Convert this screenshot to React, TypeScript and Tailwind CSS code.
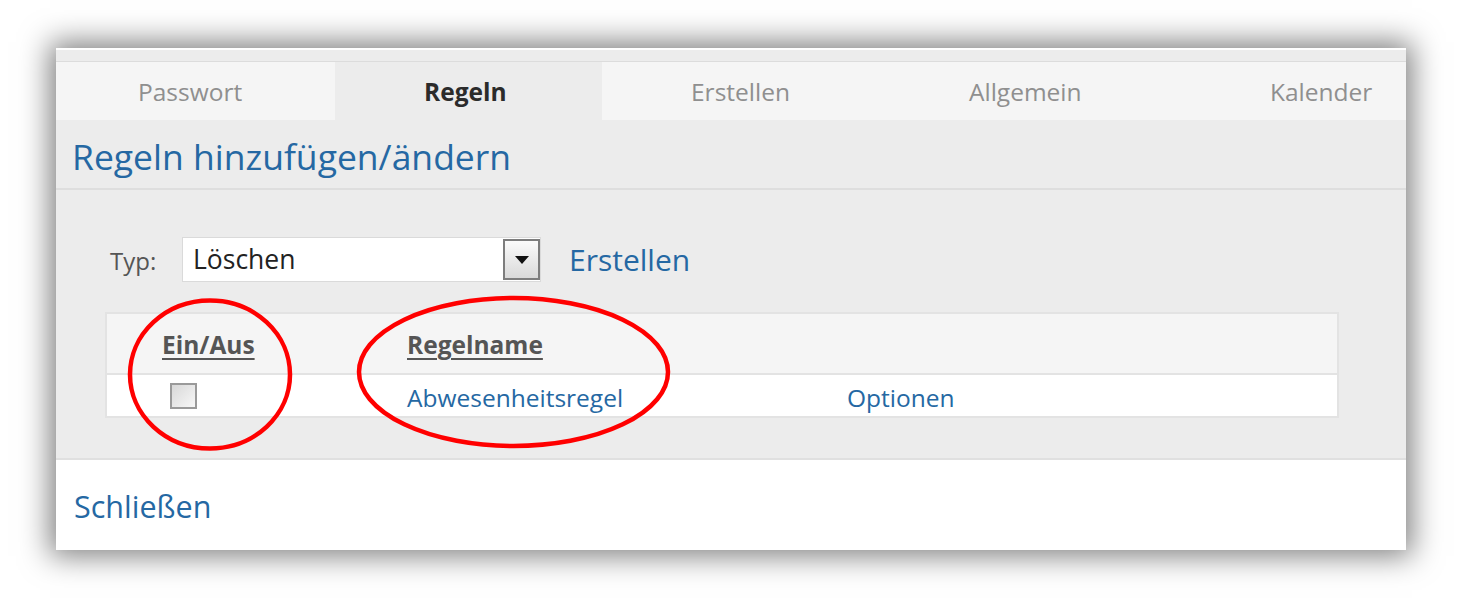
import React from "react";

const font = { fontFamily: '"Open Sans", "Noto Sans", sans-serif' };

function Tab({ label, active, cls }: { label: string; active?: boolean; cls: string }) {
  return (
    <div
      className={
        "flex h-full shrink-0 items-center pt-[2px] text-[24.5px] " +
        cls +
        " " +
        (active ? "bg-[#ececec] font-bold text-[#2b2b2b]" : "bg-[#f5f5f5] text-[#8f8f8f]")
      }
    >
      {label}
    </div>
  );
}

export default function App() {
  return (
    <div className="relative h-[601px] w-[1464px] overflow-hidden bg-white" style={font}>
      <div className="ml-[56px] mt-[48px] flex h-[502px] w-[1350px] flex-col bg-white shadow-[0_0_28px_6px_rgba(0,0,0,0.5)]">
        {/* top strip */}
        <div className="h-[14px] shrink-0 border-t-2 border-b border-t-white border-b-[#dcdcdc] bg-[#ececec]" />
        {/* tabs */}
        <div className="flex h-[58px] shrink-0 overflow-hidden bg-[#f5f5f5]">
          <Tab label="Passwort" cls="w-[279px] pl-[82px]" />
          <Tab label="Regeln" active cls="w-[267px] pl-[89px]" />
          <Tab label="Erstellen" cls="w-[276px] pl-[89px]" />
          <Tab label="Allgemein" cls="w-[301px] pl-[91px]" />
          <Tab label="Kalender" cls="flex-1 pl-[91px]" />
        </div>
        {/* heading */}
        <div className="flex h-[70px] shrink-0 items-center border-b-2 border-[#dedede] bg-[#ececec] pl-[16px] pt-[6px]">
          <span className="text-[35.5px] leading-none text-[#2568a3]">Regeln hinzufügen/ändern</span>
        </div>
        {/* main */}
        <div className="h-[270px] shrink-0 border-b-2 border-[#e0e0e0] bg-[#ececec] pl-[49px] pt-[47px]">
          <div className="flex h-[45px] items-center">
            <span className="ml-[5px] w-[72px] pt-[2px] text-[24px] text-[#555]">Typ:</span>
            <div className="flex h-[45px] w-[359px] items-center justify-between border border-[#dadada] bg-white pl-[10px]">
              <span className="text-[26.5px] text-[#222]">Löschen</span>
              <div className="flex h-[41px] w-[37px] items-center justify-center border-2 border-[#7d7d7d] bg-[linear-gradient(#fbfbfb,#d9d9d9)]">
                <svg width="14" height="8" viewBox="0 0 14 8">
                  <polygon points="0,0 14,0 7,8" fill="#111" />
                </svg>
              </div>
            </div>
            <span className="ml-[28px] text-[30px] text-[#2568a3]">Erstellen</span>
          </div>
          <div className="mt-[30px] w-[1234px] border-2 border-[#e3e3e3]">
            <div className="flex h-[61px] items-center border-b-2 border-[#e3e3e3] bg-[#f5f5f5]">
              <span className="w-[300px] pl-[55px] pt-[4px] text-[24.5px] font-bold text-[#555] underline decoration-[2px] underline-offset-[4px]">
                Ein/Aus
              </span>
              <span className="pt-[4px] text-[24.5px] font-bold text-[#555] underline decoration-[2px] underline-offset-[4px]">
                Regelname
              </span>
            </div>
            <div className="flex h-[41px] items-center bg-white">
              <div className="flex w-[300px] pl-[63px]">
                <span className="block h-[26px] w-[27px] border-2 border-[#9a9a9a] bg-[linear-gradient(135deg,#d8d8d8,#f7f7f7)]" />
              </div>
              <span className="w-[440px] pt-[6px] text-[24.5px] text-[#2568a3]">Abwesenheitsregel</span>
              <span className="pt-[6px] text-[24.5px] text-[#2568a3]">Optionen</span>
            </div>
          </div>
        </div>
        {/* footer */}
        <div className="flex flex-1 items-center bg-white pl-[18px] pt-[4px]">
          <span className="text-[30.5px] text-[#2568a3]">Schließen</span>
        </div>
      </div>
      {/* red annotation ellipses */}
      <svg className="pointer-events-none absolute left-0 top-0" width="1464" height="601">
        <ellipse cx="210" cy="374.5" rx="80" ry="74" fill="none" stroke="#f00" strokeWidth="4.5" />
        <ellipse cx="513.5" cy="372" rx="154.5" ry="74" fill="none" stroke="#f00" strokeWidth="4.5" />
      </svg>
    </div>
  );
}
